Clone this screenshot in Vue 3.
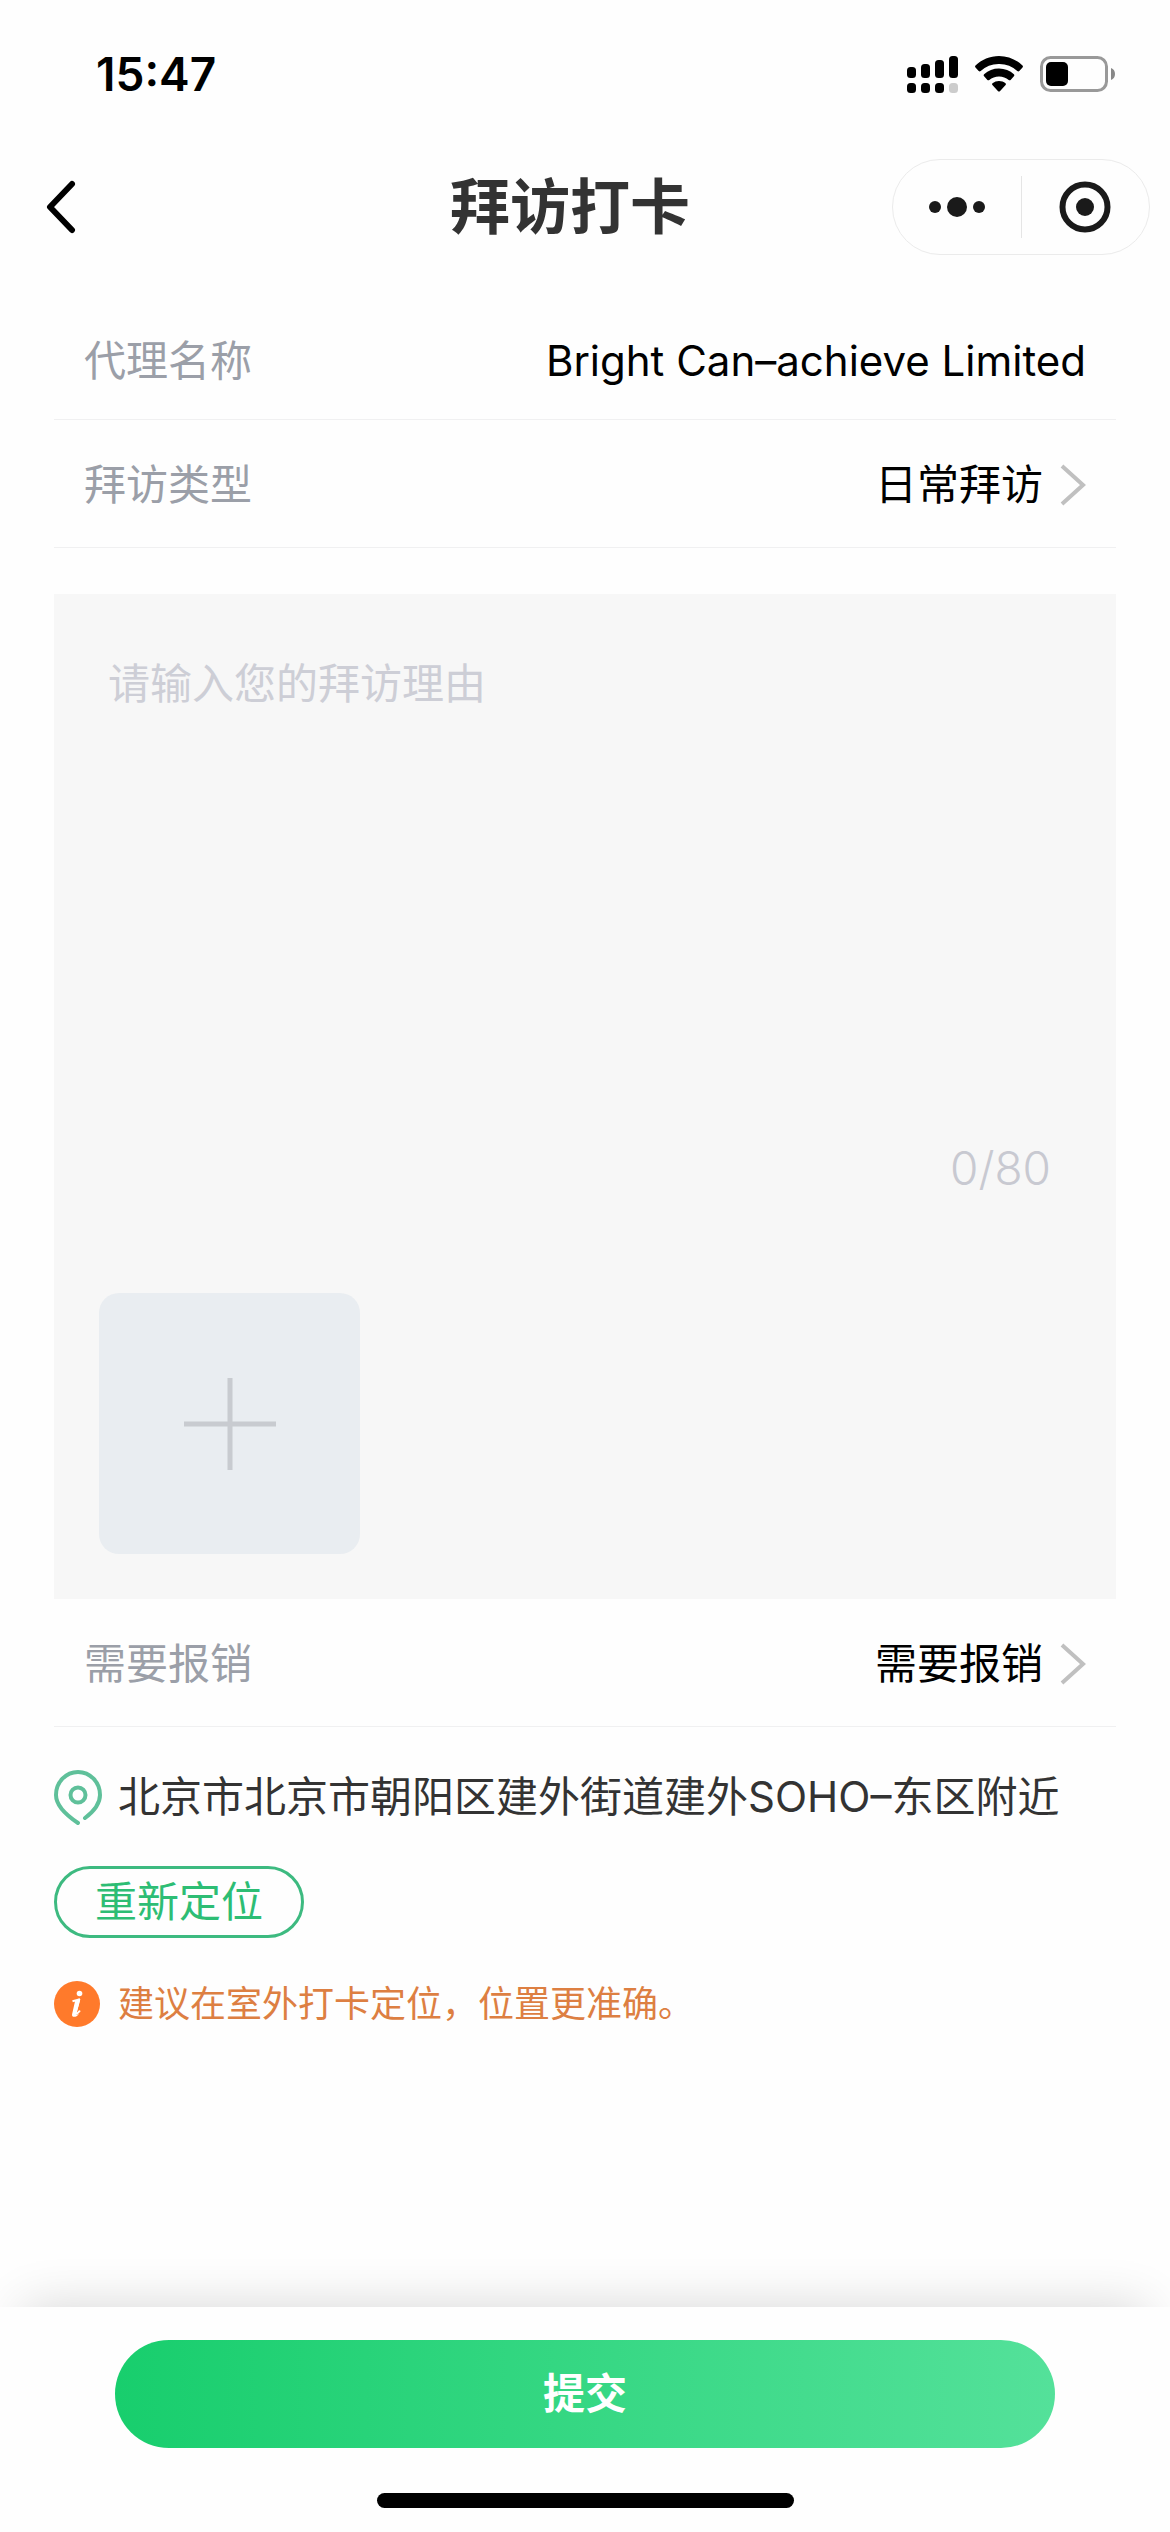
<template>
  <div class="page">
    <!-- STATUS BAR -->
    <div class="status">
      <span class="status__time">15:47</span>
      <div class="status__icons">
        <svg width="51" height="37" viewBox="0 0 51 37" aria-hidden="true">
          <rect x="0" y="11" width="9" height="11" rx="3.5" />
          <rect x="14" y="8" width="9" height="14" rx="3.5" />
          <rect x="28" y="4" width="9" height="18" rx="3.5" />
          <rect x="42" y="0" width="9" height="22" rx="3.5" />
          <rect x="0" y="27" width="9" height="10" rx="3.5" />
          <rect x="14" y="27" width="9" height="10" rx="3.5" />
          <rect x="28" y="27" width="9" height="10" rx="3.5" />
          <rect x="42" y="27" width="9" height="10" rx="3.5" fill="#ccc" />
        </svg>
        <svg width="48" height="36" viewBox="0 0 48 36" aria-hidden="true">
          <path d="M24 0c9 0 17.5 3.600 23.500 9.600.6.600.6 1.400 0 2l-3.200 3.500c-.5.500-1.400.5-2 0A26 26 0 0 0 24 8 26 26 0 0 0 5.700 15.100c-.6.500-1.500.5-2 0L.5 11.600c-.6-.6-.6-1.400 0-2C6.500 3.600 15 0 24 0z" />
          <path d="M24 12.500c5.700 0 11 2.200 14.900 5.800.6.600.6 1.400 0 2l-3.300 3.600c-.5.500-1.300.6-1.900.1A14.500 14.500 0 0 0 24 20.400c-3.700 0-7.100 1.300-9.700 3.600-.6.500-1.400.4-1.900-.1l-3.300-3.600c-.6-.6-.6-1.400 0-2A21.900 21.900 0 0 1 24 12.500z" />
          <path d="M24 25c2.500 0 4.700.8 6.500 2.200.6.500.6 1.200.1 1.700l-5.700 6.300c-.5.500-1.300.5-1.800 0l-5.700-6.300c-.5-.5-.5-1.200.1-1.700A10.500 10.500 0 0 1 24 25z" />
        </svg>
        <svg width="75" height="36" viewBox="0 0 75 36" aria-hidden="true">
          <rect x="1.5" y="1.5" width="65" height="33" rx="9" fill="none" stroke="#999" stroke-width="3" />
          <rect x="6" y="6" width="22" height="24" rx="5" />
          <path d="M71 12c2.600.8 4 3.300 4 6s-1.400 5.200-4 6z" fill="#888" />
        </svg>
      </div>
    </div>

    <!-- NAV BAR -->
    <header class="nav">
      <button class="nav__back" aria-label="返回">
        <svg width="30" height="54" viewBox="0 0 30 54">
          <path d="M26 4 4 27l22 23" fill="none" stroke="#000" stroke-width="6" stroke-linecap="round" stroke-linejoin="round" />
        </svg>
      </button>
      <h1>拜访打卡</h1>
      <div class="capsule">
        <button aria-label="更多">
          <svg width="56" height="20" viewBox="0 0 56 20" fill="#1a1a1a">
            <circle cx="6" cy="10" r="6" />
            <circle cx="28" cy="10" r="10" />
            <circle cx="50" cy="10" r="6" />
          </svg>
        </button>
        <button aria-label="关闭">
          <svg width="52" height="52" viewBox="0 0 52 52">
            <circle cx="26" cy="26" r="22.5" fill="none" stroke="#1a1a1a" stroke-width="6" />
            <circle cx="26" cy="26" r="9" fill="#1a1a1a" />
          </svg>
        </button>
      </div>
    </header>

    <main class="form">
      <div class="row row--first">
        <span class="row__label">代理名称</span>
        <span class="row__value">{{ agent }}</span>
      </div>

      <div class="row">
        <label class="row__label" for="visit-type">拜访类型</label>
        <div class="picker">
          <select id="visit-type" v-model="visitType">
            <option>日常拜访</option>
          </select>
          <svg class="picker__arrow" width="26" height="42" viewBox="0 0 26 42" aria-hidden="true">
            <path d="M2 2l21 19L2 40" />
          </svg>
        </div>
      </div>

      <section class="reason">
        <textarea v-model="reason" :maxlength="maxLength" placeholder="请输入您的拜访理由" aria-label="拜访理由"></textarea>
        <p class="reason__count">{{ reason.length }}/{{ maxLength }}</p>
        <button class="upload" aria-label="添加图片">
          <svg width="92" height="92" viewBox="0 0 92 92">
            <path d="M46 0v92M0 46h92" stroke="#c8cbd0" stroke-width="5" />
          </svg>
        </button>
      </section>

      <div class="row">
        <label class="row__label" for="expense">需要报销</label>
        <div class="picker">
          <select id="expense" v-model="expense">
            <option>需要报销</option>
          </select>
          <svg class="picker__arrow" width="26" height="42" viewBox="0 0 26 42" aria-hidden="true">
            <path d="M2 2l21 19L2 40" />
          </svg>
        </div>
      </div>

      <!-- LOCATION -->
      <section class="location">
        <p class="location__address">
          <svg width="48" height="56" viewBox="0 0 48 56" fill="none" stroke="#5fc09a" stroke-width="4" stroke-linecap="round" aria-hidden="true">
            <path d="M24 54C12 46 2 37 2 26a22 23 0 0 1 44 0c0 9-7 17-15 23" />
            <circle cx="24" cy="26" r="7.5" />
          </svg>
          <span>{{ address }}</span>
        </p>
        <button class="location__refresh">重新定位</button>
        <p class="location__tip">
          <svg width="46" height="46" viewBox="0 0 46 46" aria-hidden="true">
            <circle cx="23" cy="23" r="23" fill="#ff7a2b" />
            <circle cx="25.5" cy="12.500" r="2.800" fill="#fff" />
            <path d="M18.500 20.200l6.700-1.700-3.700 14" fill="none" stroke="#fff" stroke-width="2" stroke-linejoin="round" />
            <path d="M25.200 18.500 21.800 31c-.6 2.400.8 2.600 3.700-.8" fill="none" stroke="#fff" stroke-width="2" stroke-linecap="round" />
            <path d="M21.200 19.500h4.200L22 32.500c-.6 1.800 1 1.300 3 .2-2 2.600-4 3.600-5.800 3-1.400-.5-1.300-2-.9-3.500z" fill="#fff" />
          </svg>
          <span>建议在室外打卡定位，位置更准确。</span>
        </p>
      </section>
    </main>

    <footer class="footer">
      <button class="footer__submit">提交</button>
      <div class="footer__home"></div>
    </footer>
  </div>
</template>

<script setup>
import { ref } from 'vue'

const maxLength = 80

const agent = ref('Bright Can–achieve Limited')
const visitType = ref('日常拜访')
const reason = ref('')
const expense = ref('需要报销')
const address = ref('北京市北京市朝阳区建外街道建外SOHO–东区附近')
</script>

<style>
body { margin: 0; background: #fefefe; }
</style>

<style scoped>
.page {
  display: flex;
  flex-direction: column;
  min-height: 100vh;
  font-family: Inter, "Noto Sans CJK SC", sans-serif;
  font-size: 42px;
  line-height: 60px;
  color: #000;
}
h1, p { margin: 0; }
svg { display: block; flex: none; }
button, select, textarea {
  margin: 0;
  padding: 0;
  border: none;
  background: none;
  font: inherit;
  color: inherit;
}

/* STATUS BAR */
.status {
  display: flex;
  align-items: center;
  justify-content: space-between;
  height: 148px;
  padding: 0 55px 0 96px;
}
.status__time { font-size: 46px; font-weight: 600; }
.status__icons { display: flex; align-items: center; gap: 17px; }

/* NAV BAR */
.nav {
  display: grid;
  grid-template-columns: 1fr auto 1fr;
  align-items: center;
  height: 118px;
  padding: 0 20px 0 46px;
}
.nav__back { justify-self: start; }
.nav h1 {
  margin-right: 56px;
  font-size: 60px;
  font-weight: 700;
  color: #333;
}
.capsule {
  display: flex;
  align-items: center;
  justify-self: end;
  width: 256px;
  height: 94px;
  border: 1px solid #ebebeb;
  border-radius: 48px;
}
.capsule button {
  display: grid;
  flex: 1;
  place-items: center;
  height: 62px;
}
.capsule button + button { border-left: 1px solid #e5e5e5; }

/* FORM ROWS */
.form { padding: 34px 54px 0; }
.row {
  display: flex;
  align-items: center;
  justify-content: space-between;
  height: 125px;
  padding: 2px 30px 0;
  border-bottom: 1px solid #f0f0f1;
}
.row--first { height: 117px; }
.row__label { color: #9b9fa8; }
.picker { display: flex; align-items: center; gap: 16px; }
.picker select { appearance: none; outline: none; }
.picker__arrow path { fill: none; stroke: #c0c0c0; stroke-width: 4; }

/* VISIT REASON */
.reason {
  margin-top: 46px;
  padding: 60px 45px 45px;
  background: #f7f7f7;
}
.reason textarea {
  display: block;
  box-sizing: border-box;
  width: 100%;
  height: 484px;
  padding: 0 9px;
  resize: none;
  outline: none;
}
.reason textarea::placeholder { color: #cdced6; opacity: 1; }
.reason__count {
  padding-right: 20px;
  font-size: 46px;
  font-weight: 300;
  text-align: right;
  color: #c8c9d1;
}
.upload {
  display: grid;
  place-items: center;
  width: 261px;
  height: 261px;
  margin-top: 95px;
  border-radius: 20px;
  background: #e9edf1;
}

/* LOCATION */
.location { padding-top: 40px; }
.location__address {
  display: flex;
  align-items: center;
  gap: 16px;
  color: #333;
}
.location__refresh {
  height: 72px;
  margin: 39px 0 36px;
  padding: 0 38px;
  border: 3px solid #3dba80;
  border-radius: 36px;
  color: #2dbd74;
}
.location__tip {
  display: flex;
  align-items: center;
  gap: 18px;
  font-size: 36px;
  color: #dd7f42;
}

/* FOOTER */
.footer {
  margin-top: auto;
  padding: 33px 115px 24px;
  background: #fefefe;
  box-shadow: 0 -24px 48px -24px rgba(0, 0, 0, .16);
}
.footer__submit {
  display: block;
  width: 100%;
  height: 108px;
  border-radius: 54px;
  background: linear-gradient(90deg, #18ce6d, #54e19a);
  font-weight: 700;
  color: #fff;
}
.footer__home {
  width: 417px;
  height: 15px;
  margin: 45px auto 0;
  border-radius: 8px;
  background: #000;
}
</style>
